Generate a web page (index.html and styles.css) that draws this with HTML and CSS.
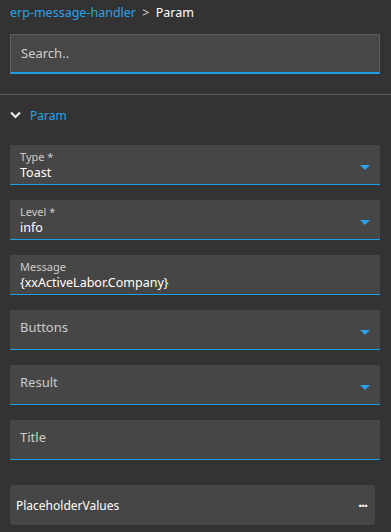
FILE: index.html
```html
<!DOCTYPE html>
<html>
<head>
    <title>Param</title>
    <link rel="stylesheet" href="styles.css">
</head>
<body>
    <div class="top">
        <div class="breadcrumb">
            <a class="crumb-link">erp-message-handler</a>
            <span class="crumb-sep">&gt;</span>
            <span class="crumb-current">Param</span>
        </div>
        <div class="search">Search..</div>
    </div>
    <div class="divider"></div>
    <div class="content">
        <div class="section-head">
            <svg class="chevron" width="11" height="8" viewBox="0 0 11 8">
                <path d="M1 1.5 L5.5 6 L10 1.5" fill="none" stroke="#e8e8e8" stroke-width="2.2"/>
            </svg>
            <span class="section-title">Param</span>
        </div>

        <div class="field select">
            <div class="label">Type *</div>
            <div class="value">Toast</div>
            <span class="arrow"></span>
        </div>
        <div class="field select">
            <div class="label">Level *</div>
            <div class="value">info</div>
            <span class="arrow"></span>
        </div>
        <div class="field">
            <div class="label">Message</div>
            <div class="value">{xxActiveLabor.Company}</div>
        </div>
        <div class="field select">
            <div class="placeholder">Buttons</div>
            <span class="arrow"></span>
        </div>
        <div class="field select">
            <div class="placeholder">Result</div>
            <span class="arrow"></span>
        </div>
        <div class="field">
            <div class="placeholder">Title</div>
        </div>

        <div class="group">
            <span class="group-title">PlaceholderValues</span>
            <span class="dots">&middot;&middot;&middot;</span>
        </div>
    </div>
</body>
</html>
```

FILE: styles.css
```css
body {
    margin: 0;
    background-color: #333333;
    font-family: "Noto Sans", "Open Sans", sans-serif;
    color: #ffffff;
}

.top {
    padding: 0 11px 0 10px;
}

.breadcrumb {
    height: 34px;
    box-sizing: border-box;
    padding-top: 5px;
    font-size: 12.5px;
    line-height: 16px;
}

.crumb-link {
    color: #2aa1ec;
}

.crumb-sep {
    color: #dddddd;
    margin: 0 3px;
}

.crumb-current {
    color: #ffffff;
}

.search {
    height: 40px;
    box-sizing: border-box;
    background-color: #474747;
    border: 1px solid #5e5e5e;
    border-bottom: 2px solid #1f9fe8;
    padding: 0 10px;
    font-size: 13px;
    line-height: 37px;
    color: #cfcfcf;
}

.divider {
    margin-top: 20px;
    height: 1px;
    background-color: #5a5a5a;
}

.content {
    padding: 0 11px 0 10px;
}

.section-head {
    display: flex;
    align-items: center;
    height: 40px;
    margin-bottom: 10px;
}

.chevron {
    margin-right: 9px;
}

.section-title {
    color: #2aa1ec;
    font-size: 12px;
}

.field {
    position: relative;
    height: 40px;
    box-sizing: border-box;
    background-color: #464646;
    border-bottom: 1px solid #1f9fe8;
    padding: 5px 10px 0;
    margin-bottom: 15px;
}

.label {
    font-size: 11px;
    line-height: 14px;
    color: #cccccc;
}

.value {
    font-size: 12.5px;
    line-height: 18px;
    color: #ffffff;
}

.placeholder {
    padding-top: 3px;
    font-size: 13px;
    line-height: 18px;
    color: #cccccc;
}

.arrow {
    position: absolute;
    right: 10px;
    top: 20px;
    width: 0;
    height: 0;
    border-left: 5px solid transparent;
    border-right: 5px solid transparent;
    border-top: 5px solid #2aa1ec;
}

.group {
    display: flex;
    align-items: center;
    justify-content: space-between;
    height: 40px;
    margin-top: 25px;
    margin-right: 5px;
    padding: 0 8px 0 6px;
    background-color: #464646;
    border-radius: 3px;
}

.group-title {
    font-size: 12px;
    color: #ffffff;
}

.dots {
    font-size: 14px;
    font-weight: bold;
    letter-spacing: -1px;
    color: #ffffff;
}
```
